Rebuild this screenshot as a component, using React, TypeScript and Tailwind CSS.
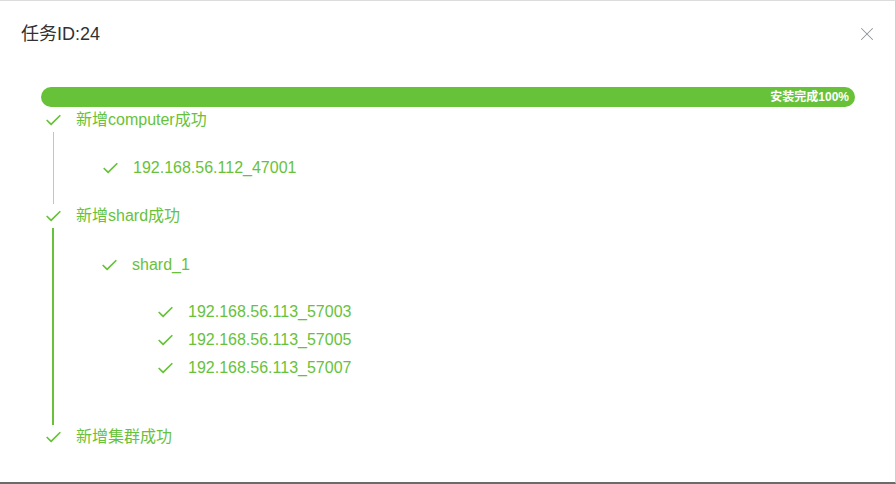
import { Check, X } from "lucide-react";

const font = { fontFamily: '"Liberation Sans", Arial, "Noto Sans CJK SC", sans-serif' };

function Row({ text, indent }: { text: string; indent: number }) {
  const pl = ["pl-[44px]", "pl-[100px]", "pl-[156px]"][indent];
  return (
    <div className={`flex h-6 items-center ${pl}`}>
      <Check size={19} strokeWidth={2.2} className="shrink-0 text-[#67c23a]" aria-hidden="true" />
      <span className="ml-[13px] text-base text-[#67c23a]">{text}</span>
    </div>
  );
}

export default function App() {
  return (
    <div
      className="h-[484px] w-[896px] overflow-hidden border-t border-r border-b-2 border-t-[#dcdcdc] border-r-[#cfcfcf] border-b-[#6b6b6b] bg-white"
      style={font}
    >
      <div className="flex h-[66px] items-center justify-between pl-[21px] pr-[17px]">
        <h2 className="text-lg text-[#303133]">任务ID:24</h2>
        <X size={22} strokeWidth={1.1} className="text-[#909399]" aria-hidden="true" />
      </div>

      <div className="pt-[20px]">
        <div className="ml-[41px] flex h-5 w-[814px] items-center justify-end rounded-full bg-[#67c23a] pr-[6px]">
          <span className="text-xs font-bold text-white">安装完成100%</span>
        </div>

        <div className="pt-px">
          <Row text="新增computer成功" indent={0} />
          <div className="ml-[53px] border-l border-[#c0c4cc] pt-6 pb-6">
            <div className="-ml-[53px]">
              <Row text="192.168.56.112_47001" indent={1} />
            </div>
          </div>

          <Row text="新增shard成功" indent={0} />
          <div className="ml-[52px] border-l-2 border-[#67c23a] pt-[25px] pb-[45px]">
            <div className="-ml-[54px]">
              <Row text="shard_1" indent={1} />
              <div className="flex flex-col gap-1 pt-[23px]">
                <Row text="192.168.56.113_57003" indent={2} />
                <Row text="192.168.56.113_57005" indent={2} />
                <Row text="192.168.56.113_57007" indent={2} />
              </div>
            </div>
          </div>

          <Row text="新增集群成功" indent={0} />
        </div>
      </div>
    </div>
  );
}
